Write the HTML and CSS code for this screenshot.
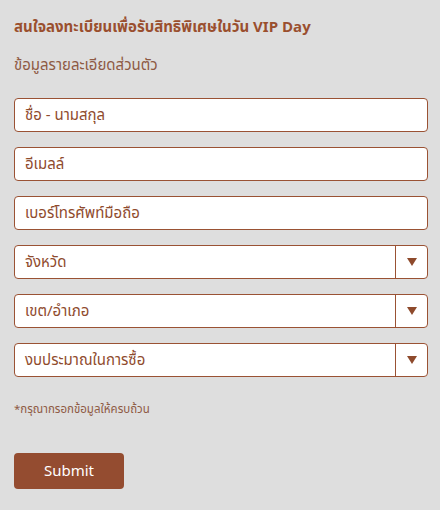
FILE: index.html
```html
<!DOCTYPE html>
<html lang="th">
<head>
  <meta charset="UTF-8">
  <meta name="viewport" content="width=device-width, initial-scale=1.0">
  <title>VIP Day</title>
  <link rel="stylesheet" href="styles.css">
</head>
<body>
  <form class="vip-form">
    <h2 class="title">สนใจลงทะเบียนเพื่อรับสิทธิพิเศษในวัน VIP Day</h2>
    <p class="subtitle">ข้อมูลรายละเอียดส่วนตัว</p>

    <div class="fields">
      <input class="field" type="text" placeholder="ชื่อ - นามสกุล">
      <input class="field" type="email" placeholder="อีเมลล์">
      <input class="field" type="tel" placeholder="เบอร์โทรศัพท์มือถือ">

      <div class="select-box">
        <span class="select-text">จังหวัด</span>
        <span class="select-arrow"><svg viewBox="0 0 10 8"><path d="M0,0H10L5,8z"/></svg></span>
      </div>
      <div class="select-box">
        <span class="select-text">เขต/อำเภอ</span>
        <span class="select-arrow"><svg viewBox="0 0 10 8"><path d="M0,0H10L5,8z"/></svg></span>
      </div>
      <div class="select-box">
        <span class="select-text">งบประมาณในการซื้อ</span>
        <span class="select-arrow"><svg viewBox="0 0 10 8"><path d="M0,0H10L5,8z"/></svg></span>
      </div>
    </div>

    <p class="note">*กรุณากรอกข้อมูลให้ครบถ้วน</p>

    <button class="submit-btn" type="button">Submit</button>
  </form>
</body>
</html>
```

FILE: styles.css
```css
body {
  margin: 0;
  background: #dedede;
  font-family: "Noto Sans Thai", "Noto Sans", "DejaVu Sans", sans-serif;
  color: #8f4b2e;
}
.vip-form {
  padding: 16px 12px 0 14px;
}
.title {
  margin: 0;
  font-size: 15px;
  font-weight: bold;
  line-height: 24px;
  color: #9a4f2e;
}
.subtitle {
  margin: 15px 0 0;
  font-size: 15px;
  line-height: 22px;
  color: #8e5a44;
}
.fields {
  margin-top: 21px;
  display: flex;
  flex-direction: column;
  gap: 15px;
}
.field,
.select-box {
  box-sizing: border-box;
  width: 414px;
  height: 34px;
  background: #fff;
  border: 1px solid #9a5234;
  border-radius: 4px;
  font-family: inherit;
  font-size: 15px;
  color: #8f4b2e;
}
.field {
  padding: 0 10px;
  outline: none;
}
.field::placeholder {
  color: #8f4b2e;
}
.select-box {
  display: grid;
  grid-template-columns: 1fr 32px;
  align-items: stretch;
}
.select-text {
  display: flex;
  align-items: center;
  padding-left: 10px;
}
.select-arrow {
  border-left: 1px solid #9a5234;
  display: flex;
  align-items: center;
  justify-content: center;
}
.select-arrow svg {
  width: 10px;
  height: 8px;
  fill: #8e4a2c;
}
.note {
  margin: 25px 0 0;
  font-size: 11.5px;
  line-height: 16px;
  color: #8e5a44;
}
.submit-btn {
  margin-top: 35px;
  width: 110px;
  height: 36px;
  border: none;
  border-radius: 4px;
  background: #944c30;
  color: #fff;
  font-family: inherit;
  font-size: 15px;
  cursor: pointer;
}
```
